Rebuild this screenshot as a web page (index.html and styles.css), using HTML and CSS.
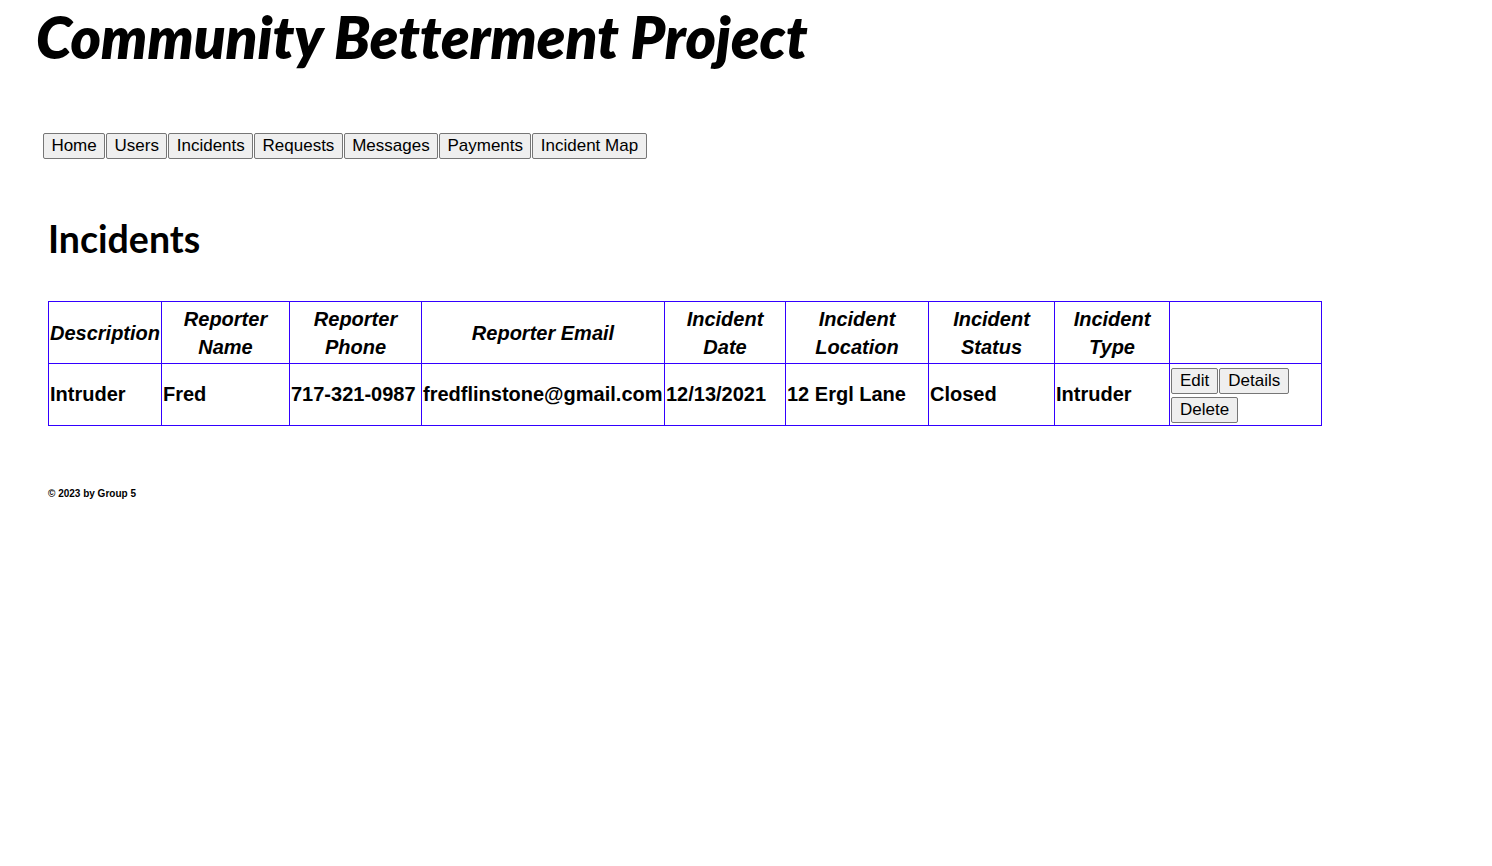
FILE: index.html
```html
<!DOCTYPE html>
<html lang="en">
<head>
<meta charset="utf-8">
<title>Incidents - Community Betterment Project</title>
<link rel="stylesheet" href="styles.css">
</head>
<body>
<header class="site-header">
  <h1 class="site-title">Community Betterment Project</h1>
  <nav class="main-nav">
    <button class="btn">Home</button>
    <button class="btn">Users</button>
    <button class="btn">Incidents</button>
    <button class="btn">Requests</button>
    <button class="btn">Messages</button>
    <button class="btn">Payments</button>
    <button class="btn">Incident Map</button>
  </nav>
</header>
<main class="content">
  <h2 class="page-title">Incidents</h2>
  <table class="incidents">
    <colgroup>
      <col class="c-desc">
      <col class="c-name">
      <col class="c-phone">
      <col class="c-email">
      <col class="c-date">
      <col class="c-loc">
      <col class="c-status">
      <col class="c-type">
      <col class="c-actions">
    </colgroup>
    <thead>
      <tr>
        <th>Description</th>
        <th>Reporter Name</th>
        <th>Reporter Phone</th>
        <th>Reporter Email</th>
        <th>Incident Date</th>
        <th>Incident Location</th>
        <th>Incident Status</th>
        <th>Incident Type</th>
        <th></th>
      </tr>
    </thead>
    <tbody>
      <tr>
        <td>Intruder</td>
        <td>Fred</td>
        <td>717-321-0987</td>
        <td>fredflinstone@gmail.com</td>
        <td>12/13/2021</td>
        <td>12 Ergl Lane</td>
        <td>Closed</td>
        <td>Intruder</td>
        <td class="actions">
          <div class="action-list">
            <button class="btn btn-row">Edit</button>
            <button class="btn btn-row">Details</button>
            <button class="btn btn-row">Delete</button>
          </div>
        </td>
      </tr>
    </tbody>
  </table>
</main>
<footer class="site-footer">
  <p class="copyright">&copy; 2023 by Group 5</p>
</footer>
</body>
</html>
```

FILE: styles.css
```css
html, body {
  margin: 0;
  padding: 0;
  background: #ffffff;
  color: #000000;
}

body {
  font-family: "Liberation Sans", Arial, sans-serif;
}

.site-header {
  padding: 0 0 0 36px;
}

.site-title {
  margin: 0;
  padding-top: 2px;
  font-family: Lato, "Open Sans", sans-serif;
  font-weight: 800;
  font-style: italic;
  font-size: 58px;
  line-height: 70px;
  letter-spacing: -0.05px;
  white-space: nowrap;
}

.main-nav {
  display: flex;
  gap: 1px;
  margin: 61px 0 0 7px;
}

.btn {
  font-family: "Liberation Sans", Arial, sans-serif;
  font-size: 17px;
  line-height: 20px;
  height: 26px;
  padding: 0 7.4px;
  margin: 0;
  background: #efefef;
  color: #000000;
  border: 1px solid #767676;
  border-radius: 2px;
  box-sizing: border-box;
}

.btn-row {
  padding: 0 8px;
}

.content {
  padding: 0 0 0 48px;
}

.page-title {
  margin: 54px 0 0 0;
  font-family: Lato, "Open Sans", sans-serif;
  font-weight: 700;
  font-size: 37.5px;
  line-height: 52px;
}

.incidents {
  margin-top: 36px;
  border-collapse: collapse;
  table-layout: fixed;
  width: 1274px;
  font-size: 20px;
  font-weight: 700;
}

.c-desc { width: 113px; }
.c-name { width: 128px; }
.c-phone { width: 132px; }
.c-email { width: 243px; }
.c-date { width: 121px; }
.c-loc { width: 143px; }
.c-status { width: 126px; }
.c-type { width: 115px; }
.c-actions { width: 152px; }

.incidents th,
.incidents td {
  border: 1px solid #3300ff;
  padding: 1px;
  vertical-align: middle;
  white-space: normal;
}

.incidents th {
  font-style: italic;
  text-align: center;
  line-height: 28px;
  height: 59px;
}

.incidents td {
  text-align: left;
  line-height: 23px;
  height: 59px;
}

.incidents td.actions {
  height: auto;
  padding: 4px 1px 2px 1px;
}

.action-list {
  display: flex;
  flex-wrap: wrap;
  column-gap: 1px;
  row-gap: 3px;
}

.site-footer {
  padding: 0 0 0 48px;
}

.copyright {
  margin: 62px 0 0 0;
  font-size: 10px;
  font-weight: 700;
  line-height: 12px;
}
```
